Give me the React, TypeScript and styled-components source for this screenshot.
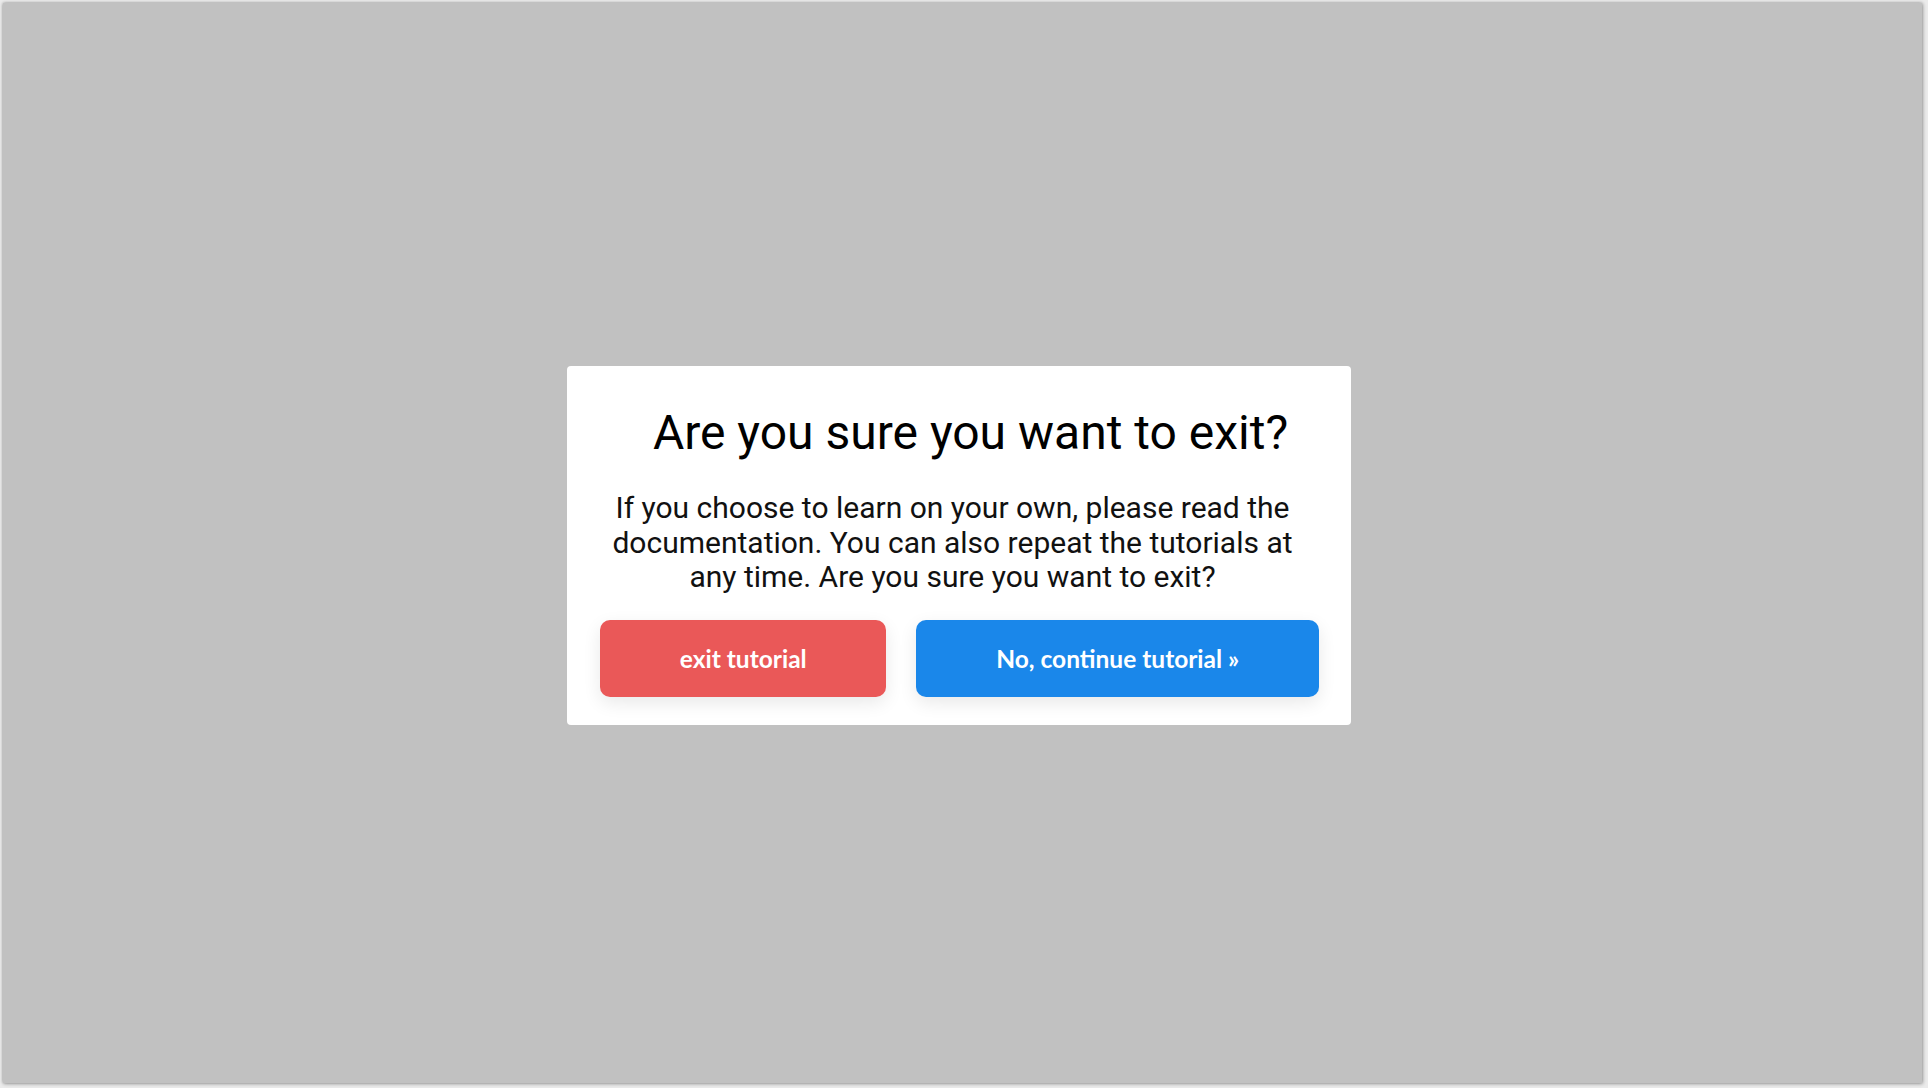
import React from "react";
import styled, { createGlobalStyle } from "styled-components";

const GlobalStyle = createGlobalStyle`
  html, body {
    margin: 0;
    padding: 0;
    width: 1928px;
    height: 1088px;
    overflow: hidden;
    background: #ebebeb;
  }
  * { box-sizing: border-box; }
`;

const Frame = styled.div`
  position: relative;
  margin: 3px 6px 5px 3px;
  width: 1919px;
  height: 1080px;
  background: #c1c1c1;
  box-shadow: 0 0 3px rgba(0, 0, 0, 0.35), 1px 1px 4px rgba(0, 0, 0, 0.2);
  display: flex;
  align-items: center;
  justify-content: center;
  padding: 5px 7px 0 0;
`;

const Dialog = styled.div`
  width: 784px;
  background: #ffffff;
  border-radius: 4px;
  padding: 38px 32px 28px 33px;
  display: flex;
  flex-direction: column;
  align-items: stretch;
`;

const Title = styled.h1`
  margin: 0 0 29px 0;
  padding-left: 22px;
  font-family: Roboto, "Liberation Sans", sans-serif;
  font-weight: 400;
  font-size: 48px;
  line-height: 58px;
  color: #000;
  text-align: center;
`;

const Message = styled.p`
  margin: 0 0 25px 0;
  font-family: Roboto, "Liberation Sans", sans-serif;
  font-weight: 400;
  font-size: 30px;
  line-height: 34.5px;
  color: #111;
  text-align: center;
  padding: 0 14px 0 0;
`;

const Actions = styled.div`
  display: flex;
  justify-content: space-between;
  gap: 30px;
`;

const Button = styled.button<{ $tone: "danger" | "primary" }>`
  flex: 1 1 auto;
  height: 77px;
  padding: 0 78px;
  border: none;
  border-radius: 10px;
  background: ${(p) => (p.$tone === "danger" ? "#ea5858" : "#1a87ea")};
  color: #ffffff;
  font-family: Lato, "Open Sans", sans-serif;
  font-weight: 700;
  font-size: 24.5px;
  white-space: nowrap;
  cursor: pointer;
  box-shadow: 0 6px 18px rgba(0, 0, 0, 0.09);
`;

export default function App() {
  return (
    <>
      <GlobalStyle />
      <Frame>
        <Dialog>
          <Title>Are you sure you want to exit?</Title>
          <Message>
            If you choose to learn on your own, please read the documentation.
            You can also repeat the tutorials at any time. Are you sure you want
            to exit?
          </Message>
          <Actions>
            <Button $tone="danger">exit tutorial</Button>
            <Button $tone="primary">No, continue tutorial »</Button>
          </Actions>
        </Dialog>
      </Frame>
    </>
  );
}
